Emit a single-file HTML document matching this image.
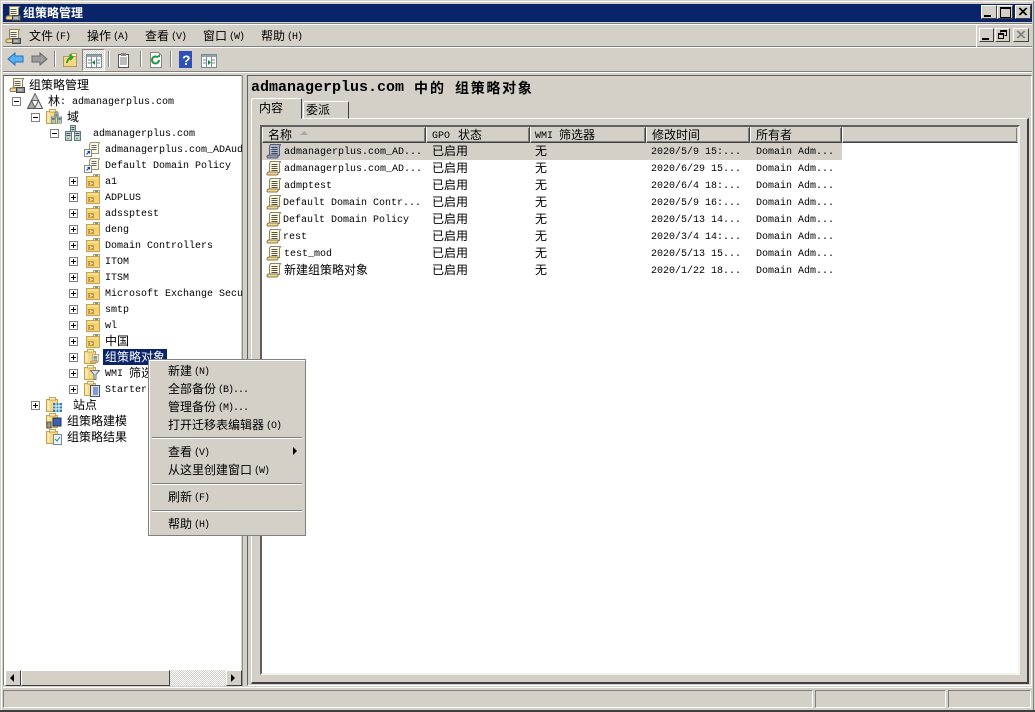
<!DOCTYPE html>
<html lang="zh"><head><meta charset="utf-8"><title>组策略管理</title>
<style>
html,body{margin:0;padding:0;background:#d4d0c8;overflow:hidden}
#w{position:relative;width:1035px;height:712px;overflow:hidden;background:#d4d0c8;font:10px/16px "Liberation Mono",monospace;color:#000}
#w div,#w svg{position:absolute}
.t{white-space:pre;height:16px;line-height:16px;margin-top:4px}
.t b{font:12px/0 "WenQuanYi Zen Hei","Noto Sans CJK SC",sans-serif;position:relative;top:1px}
.m{font-size:10px;letter-spacing:-1px;margin-left:2px}
.l{background:#808080}.h{background:#fff}
.btn{background:#d4d0c8;border:1px solid;border-color:#fff #404040 #404040 #fff;box-sizing:border-box}
.th{top:127px;height:16px;box-sizing:border-box;border:1px solid;border-color:#d4d0c8 #404040 #404040 #fff;background:#d4d0c8;box-shadow:inset -1px -1px 0 #808080}
.pb{width:9px;height:9px;box-sizing:border-box;border:1px solid #808080;background:#fff}
.pb:before{content:"";position:absolute;left:1px;top:3px;width:5px;height:1px;background:#000}
.pb.p:after{content:"";position:absolute;left:3px;top:1px;width:1px;height:5px;background:#000}
.sep{left:152px;width:150px;height:1px;background:#808080;border-bottom:1px solid #fff}
</style></head><body>
<div id="w">
<svg width="0" height="0" style="position:absolute">
<defs>
<symbol id="scroll" viewBox="0 0 16 16"><path d="M4.500 1.500h10l-1 2v9h-10v-9z" fill="#fff8d8" stroke="#8a8468"/><path d="M1 14c0-1.500 1-2 2-2h9v1.500c0 1-.5 1.500-1.500 1.500H2c-.7 0-1-.3-1-1z" fill="#f0d88c" stroke="#8a7a50"/><path d="M5.500 4.500h6M5.500 6.500h6M5.500 8.500h6M5.500 10.500h6" stroke="#505050"/></symbol>
<symbol id="scrollg" viewBox="0 0 16 16"><path d="M4.500 1.500h10l-1 2v9h-10v-9z" fill="#aab2c8" stroke="#585f78"/><path d="M1 14c0-1.500 1-2 2-2h9v1.500c0 1-.5 1.500-1.500 1.500H2c-.7 0-1-.3-1-1z" fill="#8f98b0" stroke="#585f78"/><path d="M5.500 4.500h6M5.500 6.500h6M5.500 8.500h6M5.500 10.500h6" stroke="#3c4258"/></symbol>
<symbol id="mgr" viewBox="0 0 16 16"><path d="M4.500 1.500h10l-1 2v7h-9z" fill="#fdf6d4" stroke="#8a8468"/><path d="M5.500 4.500h6M5.500 6.500h6M5.500 8.500h6" stroke="#606060"/><path d="M1 13c0-1.500 1-2 2-2h8v3.500H2c-.7 0-1-.5-1-1.500z" fill="#f0d88c" stroke="#8a7a50"/><rect x="7.500" y="10.500" width="8" height="5" fill="#8a8f96" stroke="#444"/><path d="M9 13h4" stroke="#e0e0e0"/></symbol>
<symbol id="folder" viewBox="0 0 16 16"><path d="M1.500 3.500h13v11h-13z" fill="#f3d27a" stroke="#c5a24c"/><path d="M2.500 4.500h11v1h-11z" fill="#fbe9b0"/><path d="M8.500 1.500h6v2h-6z" fill="#fff8dc" stroke="#c5a24c"/><path d="M10 2.500h3" stroke="#4a90e0"/><rect x="3" y="8" width="6" height="5" fill="#c49a3c"/><path d="M5 9.500l2 1-2 1" stroke="#fff3c0" fill="none"/></symbol>
<symbol id="folder2" viewBox="0 0 16 16"><path d="M.5 2.500h11v12H.5z" fill="#f6d884" stroke="#c5a24c"/><path d="M1.500 3.500h2v10h-2z" fill="#fdeeb8"/><path d="M3.500.5h6v2.500h-6z" fill="#fff8dc" stroke="#c5a24c"/></symbol>
<symbol id="srv" viewBox="0 0 16 16"><path d="M5.500 .5h5v6h-5zM.5 6.500h6v9h-6zM9.500 6.500h6v9h-6z" fill="#c5d2d4" stroke="#607a80"/><path d="M6.500 2.500h3M6.500 4.500h3M1.500 8.500h4M10.500 8.500h4M1.500 10.500h4M10.500 10.500h4" stroke="#3f5660"/><path d="M2 13.500h2M11 13.500h2" stroke="#3cc040"/></symbol>
<symbol id="tree" viewBox="0 0 16 16"><path d="M8 .5l3.500 7h-7z" fill="#c8c8c8" stroke="#666"/><path d="M4.500 7.500l4 8H.5z" fill="#a8a8a8" stroke="#555"/><path d="M11.500 7.500l4 8h-8z" fill="#e6e6e6" stroke="#555"/></symbol>
<symbol id="short" viewBox="0 0 16 16"><path d="M6.500 1.500h9l-1 2v9h-9v-9z" fill="#fff8e0" stroke="#9a9478"/><path d="M7.500 4.500h5M7.500 6.500h5M7.500 8.500h5" stroke="#666"/><rect x=".5" y="8.500" width="7" height="7" fill="#fff" stroke="#888"/><path d="M2.500 13.500l3-3M3.500 10.500h2v2" stroke="#1c3fa8" stroke-width="1.200" fill="none"/></symbol>
</defs>
</svg>

<!-- window edge -->
<div class="h" style="left:1px;top:1px;width:1033px;height:1px"></div>
<div class="h" style="left:1px;top:1px;width:1px;height:709px"></div>
<div style="left:1033px;top:1px;width:1px;height:710px;background:#808080"></div>
<div style="left:0;top:710px;width:1035px;height:2px;background:#404040"></div>

<!-- title bar -->
<div style="left:3px;top:4px;width:1029px;height:18px;background:#0a246a"></div>
<svg style="left:5px;top:5px" width="16" height="16"><use href="#mgr"/></svg>
<div class="t" style="left:23px;top:3px;color:#fff"><b style="font-weight:bold">组策略管理</b></div>
<div class="btn" style="left:981px;top:5px;width:16px;height:14px"></div>
<div style="left:984px;top:15px;width:7px;height:2px;background:#000"></div>
<div class="btn" style="left:997px;top:5px;width:16px;height:14px"></div>
<div style="left:1000px;top:7px;width:9px;height:8px;border:1px solid #000;border-top-width:2px"></div>
<div class="btn" style="left:1015px;top:5px;width:16px;height:14px"></div>
<svg style="left:1018px;top:7px" width="10" height="10"><path d="M1 1l7 7M2 1l7 7M8 1l-7 7M9 1l-7 7" stroke="#000"/></svg>

<!-- menu bar -->
<div class="l" style="left:3px;top:23px;width:1029px;height:1px"></div>
<div class="h" style="left:3px;top:24px;width:1029px;height:1px"></div>
<div class="h" style="left:3px;top:47px;width:1029px;height:1px"></div>
<div class="l" style="left:3px;top:46px;width:1029px;height:1px"></div>
<div class="h" style="left:976px;top:24px;width:1px;height:23px"></div>
<svg style="left:5px;top:28px" width="16" height="16"><use href="#mgr"/></svg>
<div class="t" style="left:29px;top:26px"><b>文件</b><span class="m">(F)</span></div>
<div class="t" style="left:87px;top:26px"><b>操作</b><span class="m">(A)</span></div>
<div class="t" style="left:145px;top:26px"><b>查看</b><span class="m">(V)</span></div>
<div class="t" style="left:203px;top:26px"><b>窗口</b><span class="m">(W)</span></div>
<div class="t" style="left:261px;top:26px"><b>帮助</b><span class="m">(H)</span></div>
<div class="btn" style="left:979px;top:28px;width:15px;height:14px"></div>
<div style="left:982px;top:38px;width:7px;height:2px;background:#000"></div>
<div class="btn" style="left:995px;top:28px;width:15px;height:14px"></div>
<svg style="left:997px;top:30px" width="11" height="10"><path d="M3.500.5h6v5h-2M3.500 1.500h6" fill="none" stroke="#000"/><path d="M3.500.5v2" stroke="#000"/><rect x="1.500" y="3.500" width="5" height="5" fill="none" stroke="#000"/><path d="M1.500 4.500h5" stroke="#000"/></svg>
<div class="btn" style="left:1013px;top:28px;width:16px;height:14px"></div>
<svg style="left:1016px;top:30px" width="10" height="10"><path d="M1 1l7 7M2 1l7 7M8 1l-7 7M9 1l-7 7" stroke="#808080"/></svg>

<!-- toolbar -->
<svg style="left:7px;top:51px" width="18" height="16"><path d="M1 8l7-6v3h8v6H8v3z" fill="#5ab0f0" stroke="#2470c0"/></svg>
<svg style="left:30px;top:51px" width="18" height="16"><path d="M17 8l-7-6v3H2v6h8v3z" fill="#9c9c9c" stroke="#666"/></svg>
<div class="l" style="left:54px;top:51px;width:1px;height:16px"></div>
<div class="h" style="left:55px;top:51px;width:1px;height:16px"></div>
<svg style="left:62px;top:52px" width="16" height="16"><path d="M1.500 4.500h13v10h-13z" fill="#f6d884" stroke="#b69a50"/><path d="M9.500 1.500h5v3h-5z" fill="#fff6d0" stroke="#b69a50"/><path d="M5 11c0-3 2-5 5-6M7.500 2.500L10.500 5 8 8" stroke="#2aa52a" stroke-width="2" fill="none"/></svg>
<div style="left:82px;top:49px;width:23px;height:22px;box-sizing:border-box;border:1px solid;border-color:#808080 #fff #fff #808080;background:#d4d0c8;background-image:repeating-conic-gradient(#d4d0c8 0 25%,#fff 0 50%);background-size:2px 2px"></div>
<svg style="left:86px;top:54px" width="16" height="14"><rect x=".5" y=".5" width="15" height="13" fill="#fff" stroke="#7a8a96"/><rect x="1" y="1" width="14" height="2" fill="#8ea2b0"/><path d="M5.500 3v10M10.500 3v10M2 6h3M2 9h3M11 6h3M11 9h3" stroke="#7a8a96"/><path d="M9 6v5l-3-2.500z" fill="#0a8a30"/></svg>
<div class="l" style="left:108px;top:51px;width:1px;height:16px"></div>
<div class="h" style="left:109px;top:51px;width:1px;height:16px"></div>
<svg style="left:117px;top:52px" width="14" height="16"><rect x="1.500" y="2.500" width="10" height="13" fill="#fff" stroke="#555"/><rect x="4" y="1" width="5" height="3" fill="#888"/><path d="M3 6h7M3 8h7M3 10h7M3 12h7" stroke="#777"/></svg>
<div class="l" style="left:140px;top:51px;width:1px;height:16px"></div>
<div class="h" style="left:141px;top:51px;width:1px;height:16px"></div>
<svg style="left:149px;top:52px" width="14" height="16"><path d="M1.500.5h8l3 3v12h-11z" fill="#fff" stroke="#888"/><path d="M10 8a3.500 3.500 0 1 1-1-2.500" stroke="#1a9a3a" stroke-width="2" fill="none"/><path d="M7 5h4v-3z" fill="#1a9a3a"/></svg>
<div class="l" style="left:170px;top:51px;width:1px;height:16px"></div>
<div class="h" style="left:171px;top:51px;width:1px;height:16px"></div>
<div style="left:179px;top:51px;width:13px;height:17px;background:#2c50b8"></div>
<div style="left:182px;top:52px;color:#fff;font:bold 14px/16px 'Liberation Sans',sans-serif">?</div>
<svg style="left:201px;top:54px" width="16" height="14"><rect x=".5" y=".5" width="15" height="13" fill="#fff" stroke="#7a8a96"/><rect x="1" y="1" width="14" height="2" fill="#8ea2b0"/><path d="M5.500 3v10M10.500 3v10M2 6h3M2 9h3M11 6h3M11 9h3" stroke="#7a8a96"/><path d="M7 6v5l3-2.500z" fill="#0a8a30"/></svg>

<!-- frame between toolbar and panes -->
<div class="l" style="left:3px;top:71px;width:1029px;height:1px"></div>
<div class="h" style="left:3px;top:72px;width:1029px;height:1px"></div>

<!-- tree pane -->
<div style="left:3px;top:75px;width:239px;height:611px;background:#fff;box-sizing:border-box;border:1px solid;border-color:#606060 #d4d0c8 #d4d0c8 #808080"></div>
<div style="left:242px;top:75px;width:1px;height:611px;background:#909090"></div>

<svg style="left:9px;top:77px" width="16" height="16"><use href="#mgr"/></svg>
<div class="t" style="left:29px;top:75px"><b>组策略管理</b></div>
<div class="pb" style="left:12px;top:97px"></div>
<svg style="left:27px;top:93px" width="16" height="16"><use href="#tree"/></svg>
<div class="t" style="left:48px;top:91px"><b>林</b>: admanagerplus.com</div>
<div class="pb" style="left:31px;top:113px"></div>
<svg style="left:46px;top:109px" width="16" height="16"><use href="#folder2"/><use href="#srv" x="5" y="3" width="11" height="12"/></svg>
<div class="t" style="left:67px;top:107px"><b>域</b></div>
<div class="pb" style="left:50px;top:129px"></div>
<svg style="left:65px;top:125px" width="16" height="16"><use href="#srv"/></svg>
<div class="t" style="left:93px;top:123px">admanagerplus.com</div>
<svg style="left:84px;top:141px" width="16" height="16"><use href="#short"/></svg>
<div class="t" style="left:105px;top:139px;width:137px;overflow:hidden">admanagerplus.com_ADAudit</div>
<svg style="left:84px;top:157px" width="16" height="16"><use href="#short"/></svg>
<div class="t" style="left:105px;top:155px">Default Domain Policy</div>

<div class="pb p" style="left:69px;top:177px"></div><svg style="left:85px;top:173px" width="16" height="16"><use href="#folder"/></svg><div class="t" style="left:105px;top:171px">a1</div>
<div class="pb p" style="left:69px;top:193px"></div><svg style="left:85px;top:189px" width="16" height="16"><use href="#folder"/></svg><div class="t" style="left:105px;top:187px">ADPLUS</div>
<div class="pb p" style="left:69px;top:209px"></div><svg style="left:85px;top:205px" width="16" height="16"><use href="#folder"/></svg><div class="t" style="left:105px;top:203px">adssptest</div>
<div class="pb p" style="left:69px;top:225px"></div><svg style="left:85px;top:221px" width="16" height="16"><use href="#folder"/></svg><div class="t" style="left:105px;top:219px">deng</div>
<div class="pb p" style="left:69px;top:241px"></div><svg style="left:85px;top:237px" width="16" height="16"><use href="#folder"/></svg><div class="t" style="left:105px;top:235px">Domain Controllers</div>
<div class="pb p" style="left:69px;top:257px"></div><svg style="left:85px;top:253px" width="16" height="16"><use href="#folder"/></svg><div class="t" style="left:105px;top:251px">ITOM</div>
<div class="pb p" style="left:69px;top:273px"></div><svg style="left:85px;top:269px" width="16" height="16"><use href="#folder"/></svg><div class="t" style="left:105px;top:267px">ITSM</div>
<div class="pb p" style="left:69px;top:289px"></div><svg style="left:85px;top:285px" width="16" height="16"><use href="#folder"/></svg><div class="t" style="left:105px;top:283px;width:137px;overflow:hidden">Microsoft Exchange Security</div>
<div class="pb p" style="left:69px;top:305px"></div><svg style="left:85px;top:301px" width="16" height="16"><use href="#folder"/></svg><div class="t" style="left:105px;top:299px">smtp</div>
<div class="pb p" style="left:69px;top:321px"></div><svg style="left:85px;top:317px" width="16" height="16"><use href="#folder"/></svg><div class="t" style="left:105px;top:315px">wl</div>
<div class="pb p" style="left:69px;top:337px"></div><svg style="left:85px;top:333px" width="16" height="16"><use href="#folder"/></svg><div class="t" style="left:105px;top:331px"><b>中国</b></div>
<div class="pb p" style="left:69px;top:353px"></div><svg style="left:84px;top:349px" width="16" height="16"><use href="#folder2"/><use href="#scroll" x="6" y="4" width="10" height="11"/></svg>
<div style="left:103px;top:349px;width:64px;height:16px;background:#0a246a"></div>
<div class="t" style="left:105px;top:347px;color:#fff"><b>组策略对象</b></div>
<div class="pb p" style="left:69px;top:369px"></div><svg style="left:84px;top:365px" width="16" height="16"><use href="#folder2"/><path d="M6.500 5.500h9l-3.500 4v5h-2v-5z" fill="#dde3e8" stroke="#6a7680"/></svg><div class="t" style="left:105px;top:363px">WMI <b>筛选器</b></div>
<div class="pb p" style="left:69px;top:385px"></div><svg style="left:84px;top:381px" width="16" height="16"><use href="#folder2"/><rect x="6.500" y="4.500" width="9" height="11" fill="#dfe6f2" stroke="#456"/><path d="M9 7h5M9 9h5M9 11h5M9 13h5" stroke="#2850a0"/></svg><div class="t" style="left:105px;top:379px">Starter GPO</div>
<div class="pb p" style="left:31px;top:401px"></div><svg style="left:46px;top:397px" width="16" height="16"><use href="#folder2"/><rect x="7" y="6" width="9" height="9" fill="#2a80b8"/><path d="M10 6v9M13 6v9M7 9h9M7 12h9" stroke="#fff"/></svg><div class="t" style="left:73px;top:395px"><b>站点</b></div>
<svg style="left:46px;top:413px" width="16" height="16"><use href="#folder2"/><rect x="7" y="5" width="8" height="8" fill="#3d5fb8" stroke="#234"/><rect x="1" y="9" width="4" height="6" fill="#8fa090" stroke="#555"/></svg><div class="t" style="left:67px;top:411px"><b>组策略建模</b></div>
<svg style="left:46px;top:429px" width="16" height="16"><use href="#folder2"/><rect x="7.500" y="5.500" width="8" height="10" fill="#eef2f4" stroke="#789"/><path d="M9 10l2 2 3-4" stroke="#1a8a9a" fill="none"/></svg><div class="t" style="left:67px;top:427px"><b>组策略结果</b></div>

<!-- tree scrollbar -->
<div style="left:5px;top:670px;width:236px;height:16px;background:#d4d0c8"></div>
<div style="left:170px;top:670px;width:56px;height:16px;background-image:repeating-conic-gradient(#d4d0c8 0 25%,#fff 0 50%);background-size:2px 2px"></div>
<div class="btn" style="left:5px;top:670px;width:16px;height:16px"></div>
<svg style="left:10px;top:674px" width="6" height="8"><path d="M4 0v8L0 4z"/></svg>
<div class="btn" style="left:21px;top:670px;width:149px;height:16px"></div>
<div class="btn" style="left:226px;top:670px;width:16px;height:16px"></div>
<svg style="left:231px;top:674px" width="6" height="8"><path d="M0 0v8l4-4z"/></svg>

<!-- right pane -->
<div style="left:247px;top:75px;width:785px;height:611px;box-sizing:border-box;border:1px solid;border-color:#606060 #fff #fff #606060"></div>
<div style="left:251px;top:80px;white-space:pre;font:bold 15px/16px 'Liberation Mono',monospace">admanagerplus.com</div>
<div style="left:414px;top:80px;white-space:pre;font:bold 14px/16px 'WenQuanYi Zen Hei','Noto Sans CJK SC',sans-serif;letter-spacing:2px">中的</div>
<div style="left:455px;top:80px;white-space:pre;font:bold 14px/16px 'WenQuanYi Zen Hei','Noto Sans CJK SC',sans-serif;letter-spacing:1.700px">组策略对象</div>

<!-- tab client -->
<div style="left:251px;top:118px;width:778px;height:566px;box-sizing:border-box;border:1px solid;border-color:#fff #404040 #404040 #fff;border-right-width:2px;border-bottom-width:2px"></div>
<!-- tabs -->
<div style="left:251px;top:98px;width:51px;height:21px;background:#d4d0c8;box-sizing:border-box;border:1px solid;border-color:#fff #404040 transparent #fff;border-radius:2px 2px 0 0"></div>
<div class="t" style="left:259px;top:98px"><b>内容</b></div>
<div style="left:303px;top:101px;width:46px;height:18px;box-sizing:border-box;border:1px solid;border-color:#fff #404040 #fff #fff;border-radius:2px 2px 0 0"></div>
<div class="t" style="left:306px;top:100px"><b>委派</b></div>

<!-- list -->
<div style="left:260px;top:125px;width:760px;height:550px;background:#fff;box-sizing:border-box;border:2px solid;border-color:#606060 #f4f3f0 #f4f3f0 #606060"></div>
<div class="th" style="left:262px;width:164px"></div>
<div class="th" style="left:426px;width:104px"></div>
<div class="th" style="left:530px;width:116px"></div>
<div class="th" style="left:646px;width:104px"></div>
<div class="th" style="left:750px;width:92px"></div>
<div class="th" style="left:842px;width:176px;border-right-color:#d4d0c8"></div>
<div class="t" style="left:268px;top:125px"><b>名称</b></div>
<svg style="left:300px;top:131px" width="9" height="5"><path d="M4.500 0L0 4h8z" fill="#a8a8a8"/></svg>
<div class="t" style="left:432px;top:125px">GPO <b style="left:2px">状态</b></div>
<div class="t" style="left:535px;top:125px">WMI <b>筛选器</b></div>
<div class="t" style="left:652px;top:125px"><b>修改时间</b></div>
<div class="t" style="left:756px;top:125px"><b>所有者</b></div>

<div style="left:262px;top:143px;width:580px;height:17px;background:#d4d0c8"></div>

<svg style="left:266px;top:143px" width="16" height="16"><use href="#scrollg"/></svg>
<div class="t" style="left:284px;top:141px">admanagerplus.com_AD...</div><div class="t" style="left:432px;top:141px"><b>已启用</b></div><div class="t" style="left:535px;top:141px"><b>无</b></div><div class="t" style="left:651px;top:141px">2020/5/9 15:...</div><div class="t" style="left:756px;top:141px">Domain Adm...</div>
<svg style="left:266px;top:160px" width="16" height="16"><use href="#scroll"/></svg>
<div class="t" style="left:284px;top:158px">admanagerplus.com_AD...</div><div class="t" style="left:432px;top:158px"><b>已启用</b></div><div class="t" style="left:535px;top:158px"><b>无</b></div><div class="t" style="left:651px;top:158px">2020/6/29 15...</div><div class="t" style="left:756px;top:158px">Domain Adm...</div>
<svg style="left:266px;top:177px" width="16" height="16"><use href="#scroll"/></svg>
<div class="t" style="left:284px;top:175px">admptest</div><div class="t" style="left:432px;top:175px"><b>已启用</b></div><div class="t" style="left:535px;top:175px"><b>无</b></div><div class="t" style="left:651px;top:175px">2020/6/4 18:...</div><div class="t" style="left:756px;top:175px">Domain Adm...</div>
<svg style="left:266px;top:194px" width="16" height="16"><use href="#scroll"/></svg>
<div class="t" style="left:283px;top:192px">Default Domain Contr...</div><div class="t" style="left:432px;top:192px"><b>已启用</b></div><div class="t" style="left:535px;top:192px"><b>无</b></div><div class="t" style="left:651px;top:192px">2020/5/9 16:...</div><div class="t" style="left:756px;top:192px">Domain Adm...</div>
<svg style="left:266px;top:211px" width="16" height="16"><use href="#scroll"/></svg>
<div class="t" style="left:283px;top:209px">Default Domain Policy</div><div class="t" style="left:432px;top:209px"><b>已启用</b></div><div class="t" style="left:535px;top:209px"><b>无</b></div><div class="t" style="left:651px;top:209px">2020/5/13 14...</div><div class="t" style="left:756px;top:209px">Domain Adm...</div>
<svg style="left:266px;top:228px" width="16" height="16"><use href="#scroll"/></svg>
<div class="t" style="left:283px;top:226px">rest</div><div class="t" style="left:432px;top:226px"><b>已启用</b></div><div class="t" style="left:535px;top:226px"><b>无</b></div><div class="t" style="left:651px;top:226px">2020/3/4 14:...</div><div class="t" style="left:756px;top:226px">Domain Adm...</div>
<svg style="left:266px;top:245px" width="16" height="16"><use href="#scroll"/></svg>
<div class="t" style="left:284px;top:243px">test_mod</div><div class="t" style="left:432px;top:243px"><b>已启用</b></div><div class="t" style="left:535px;top:243px"><b>无</b></div><div class="t" style="left:651px;top:243px">2020/5/13 15...</div><div class="t" style="left:756px;top:243px">Domain Adm...</div>
<svg style="left:266px;top:262px" width="16" height="16"><use href="#scroll"/></svg>
<div class="t" style="left:284px;top:260px"><b>新建组策略对象</b></div><div class="t" style="left:432px;top:260px"><b>已启用</b></div><div class="t" style="left:535px;top:260px"><b>无</b></div><div class="t" style="left:651px;top:260px">2020/1/22 18...</div><div class="t" style="left:756px;top:260px">Domain Adm...</div>

<!-- status bar -->
<div class="h" style="left:3px;top:687px;width:1029px;height:1px"></div>
<div style="left:3px;top:690px;width:810px;height:18px;box-sizing:border-box;border:1px solid;border-color:#808080 #fff #fff #808080"></div>
<div style="left:815px;top:690px;width:131px;height:18px;box-sizing:border-box;border:1px solid;border-color:#808080 #fff #fff #808080"></div>
<div style="left:948px;top:690px;width:83px;height:18px;box-sizing:border-box;border:1px solid;border-color:#808080 #fff #fff #808080"></div>

<!-- context menu -->
<div style="left:148px;top:359px;width:158px;height:177px;background:#d4d0c8;box-sizing:border-box;border:1px solid #808080;box-shadow:inset 1px 1px 0 #fff"></div>
<div class="t" style="left:168px;top:361px"><b>新建</b><span class="m">(N)</span></div>
<div class="t" style="left:168px;top:379px"><b>全部备份</b><span class="m">(B)...</span></div>
<div class="t" style="left:168px;top:397px"><b>管理备份</b><span class="m">(M)...</span></div>
<div class="t" style="left:168px;top:415px"><b>打开迁移表编辑器</b><span class="m">(O)</span></div>
<div class="sep" style="top:437px"></div>
<div class="t" style="left:168px;top:442px"><b>查看</b><span class="m">(V)</span></div>
<svg style="left:293px;top:447px" width="5" height="8"><path d="M0 0v8l4-4z"/></svg>
<div class="t" style="left:168px;top:460px"><b>从这里创建窗口</b><span class="m">(W)</span></div>
<div class="sep" style="top:483px"></div>
<div class="t" style="left:168px;top:487px"><b>刷新</b><span class="m">(F)</span></div>
<div class="sep" style="top:510px"></div>
<div class="t" style="left:168px;top:514px"><b>帮助</b><span class="m">(H)</span></div>
</div>
</body></html>
